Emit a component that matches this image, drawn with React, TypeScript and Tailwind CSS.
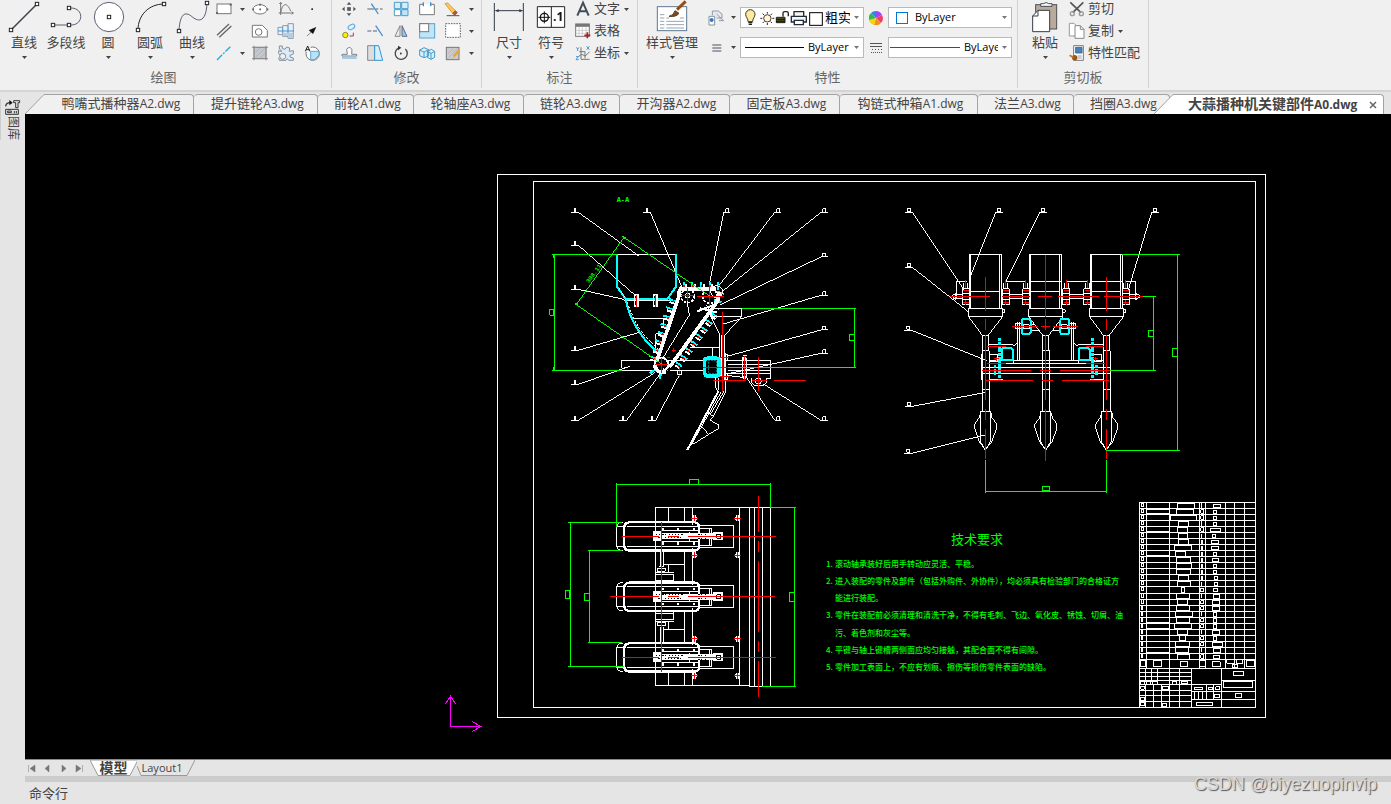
import React from "react";

type Kids = { children?: React.ReactNode };

const cjk = "font-['Open_Sans','Noto_Sans_CJK_SC',sans-serif]";

/* ---------- shared ribbon pieces ---------- */

function Ico({ vb, w = 22, h = 22, children }: Kids & { vb: string; w?: number; h?: number }) {
  return (
    <svg viewBox={vb} width={w} height={h} fill="none" stroke="#5b6170" strokeWidth="3" className="block shrink-0" aria-hidden="true">
      {children}
    </svg>
  );
}

function Caret() {
  return (
    <svg viewBox="0 0 5 3" width="5" height="3" className="block shrink-0" aria-hidden="true">
      <path d="M0 0H5L2.5 3Z" fill="#444" />
    </svg>
  );
}

function Big({ label, caret = true, wide = false, children }: Kids & { label: string; caret?: boolean; wide?: boolean }) {
  return (
    <button type="button" className={`flex shrink-0 flex-col items-center ${wide ? "w-[52px]" : "w-[42px]"}`}>
      {children}
      <span className="whitespace-nowrap leading-4">{label}</span>
      <span className="flex h-3.5 items-center">{caret && <Caret />}</span>
    </button>
  );
}

function Tool({ name, vb, children }: Kids & { name: string; vb: string }) {
  return (
    <button type="button" aria-label={name} className="flex h-[22px] w-[26px] shrink-0 items-center justify-center">
      <Ico vb={vb}>{children}</Ico>
    </button>
  );
}

function Drop({ name }: { name: string }) {
  return (
    <button type="button" aria-label={name} className="flex h-[22px] w-2.5 shrink-0 items-center justify-center">
      <Caret />
    </button>
  );
}

function Row({ children }: Kids) {
  return <div className="flex h-[22px] items-center">{children}</div>;
}

function Named({ label, vb, caret = false, children }: Kids & { label: string; vb: string; caret?: boolean }) {
  return (
    <button type="button" className="flex h-[22px] items-start whitespace-nowrap">
      <Ico vb={vb}>{children}</Ico>
      <span className="leading-5">{label}</span>
      {caret && <span className="flex h-[22px] items-center pl-1"><Caret /></span>}
    </button>
  );
}

function Group({ title, width, children }: Kids & { title: string; width: string }) {
  return (
    <section aria-label={title} className={`flex h-[88px] shrink-0 flex-col border-r border-[#d2d2d2] ${width}`}>
      <div className="flex h-[68px]">{children}</div>
      <div className="text-center leading-[18px] text-[#666]">{title}</div>
    </section>
  );
}

const sq = (x: number, y: number) => <rect key={`${x}-${y}`} x={x - 5} y={y - 5} width="10" height="10" fill="#fff" stroke="#222" />;

/* ---------- ribbon groups ---------- */

function DrawGroup() {
  return (
    <Group title="绘图" width="w-[332px] pr-1">
      <div className="flex pl-[3px]">
        <Big label="直线"><Ico vb="9 0 126 102" w={42} h={34}><path d="M33 90L111 12" strokeWidth="5" stroke="#444455" />{sq(33, 90)}{sq(111, 12)}</Ico></Big>
        <Big label="多段线" caret={false}><Ico vb="135 0 126 102" w={42} h={34}><path d="M159 75H213C252 75 252 24 213 24H207" />{sq(159, 75)}{sq(207, 75)}{sq(207, 24)}</Ico></Big>
        <Big label="圆"><Ico vb="261 0 126 102" w={42} h={34}><circle cx="327" cy="51" r="44" fill="#fff" />{sq(327, 51)}</Ico></Big>
        <Big label="圆弧"><Ico vb="387 0 126 102" w={42} h={34}><path d="M414 90C414 45 447 12 492 12" stroke="#222" />{sq(414, 90)}{sq(492, 12)}</Ico></Big>
        <Big label="曲线"><Ico vb="513 0 126 102" w={42} h={34}><path d="M537 93C540 30 562 38 576 50S618 75 621 9" />{sq(537, 93)}{sq(621, 9)}</Ico></Big>
      </div>
      <div className="-ml-0.5 -mt-0.5">
        <Row>
          <Tool name="矩形" vb="642 -6 66 66"><rect x="654" y="12" width="42" height="29" fill="#fff" stroke="#777" /><path d="M651 39h6M692 14h6" stroke="#555" strokeWidth="5" /></Tool>
          <Drop name="矩形选项" />
          <Tool name="椭圆" vb="747 -6 66 66"><ellipse cx="780" cy="28" rx="21" ry="14" fill="#fff" stroke="#777" /><path d="M778 28h5M757 28h5M800 28h5M778 14h5" strokeWidth="5" /></Tool>
          <Tool name="曲线图" vb="825 -6 66 66"><path d="M842 8V45M836 39H880M838 12l4-5 4 5M875 35l5 4-5 4M842 39C848 5 862 8 872 33" stroke="#777" /></Tool>
          <Tool name="点" vb="903 -6 66 66"><rect x="934" y="25" width="5" height="5" fill="#222" stroke="none" /></Tool>
        </Row>
        <Row>
          <Tool name="双线" vb="642 60 66 66"><path d="M654 106L690 72M661 112L697 78" strokeWidth="4" stroke="#666" /></Tool>
          <span className="w-2.5" />
          <Tool name="轮廓" vb="747 60 66 66"><path d="M757 76H787L802 91V111H757Z" fill="#fff" stroke="#777" /><circle cx="776" cy="96" r="10" stroke="#777" /></Tool>
          <Tool name="轴" vb="825 60 66 66"><path d="M834 82H848V104H834ZM848 77H864V109H848ZM864 71H880V115H864Z" fill="#e5f2fc" stroke="#8a9ab0" /><path d="M864 98H880V114H864ZM848 98H864V108H848Z" fill="#b9cde2" stroke="none" /><path d="M834 93H882" stroke="#3a9be0" /></Tool>
          <Tool name="箭头" vb="903 60 66 66"><path d="M921 108L936 94" stroke="#888" /><path d="M948 82L939 101L927 91Z" fill="#111" stroke="#111" strokeWidth="1" /></Tool>
        </Row>
        <Row>
          <Tool name="中心线" vb="642 126 66 66"><path d="M654 180L694 140" stroke="#27a8e0" strokeWidth="4" strokeDasharray="22 4 6 4" /></Tool>
          <Drop name="中心线选项" />
          <Tool name="剖面线" vb="747 126 66 66"><rect x="762" y="142" width="36" height="34" fill="#c5c8cc" stroke="#999" /><path d="M762 137V181M798 137V181M756 142H804M756 176H804" stroke="#8a8a8a" /><path d="M766 172L794 146M766 158L780 144M780 174L796 160" stroke="#a6a9ad" strokeWidth="2" /></Tool>
          <Tool name="齿轮" vb="825 126 66 66"><path d="M838 147V138H847V145L855 148L860 141L869 144L868 154L880 152V162L870 166V171L880 174V181H866L862 176L858 181H838L836 174L843 168L836 161V152L846 154Z" fill="#dcebf6" stroke="#85909c" /><circle cx="848" cy="169" r="9" fill="#f0f0f0" stroke="#85909c" /></Tool>
          <Tool name="局部视图" vb="903 126 66 66"><circle cx="938" cy="161" r="20" fill="#fff" stroke="#777" /><path d="M932 154H957V165L944 179H932Z" fill="#b9e1f8" stroke="#5aa9d6" /><path d="M914 156V136H932V156Z" fill="#f0f0f0" stroke="none" /><path d="M916 154L923 138L930 154M918 149H928" stroke="#222" /></Tool>
        </Row>
      </div>
    </Group>
  );
}

function EditGroup() {
  return (
    <Group title="修改" width="w-[150px]">
      <div className="-mt-0.5 pl-1">
        <Row>
          <Tool name="移动" vb="23 -6 66 66"><rect x="52" y="23" width="8" height="8" fill="#555" /><path d="M56 6l7 8H49zM56 48l7-8H49zM35 27l8-7v14zM77 27l-8-7v14z" fill="#555" stroke="none" /></Tool>
          <Tool name="修剪" vb="101 -6 66 66"><path d="M111 27H157" stroke="#5b6170" strokeDasharray="20 5 8 5" /><path d="M123 11L144 42" stroke="#3c8fd8" strokeWidth="4" /></Tool>
          <Tool name="阵列" vb="180 -6 66 66"><path d="M193 7H212V26H193ZM215 7H234V26H215Z" fill="#d3eefc" stroke="#4d9cc8" /><path d="M193 29H212V47H193Z" fill="#fff" stroke="#4d9cc8" /><path d="M215 29H234V47H215Z" fill="#bfe4f9" stroke="#4d9cc8" /></Tool>
          <Tool name="打断" vb="258 -6 66 66"><path d="M280 13H269V44H313V13H302" fill="#fff" stroke="#777" /><path d="M280 7V19M302 7V19" stroke="#3c8fd8" strokeWidth="4" /></Tool>
          <Tool name="删除" vb="336 -6 66 66"><path d="M345 11L353 9L376 32L368 40Z" fill="#ffc65b" stroke="#e39a31" /><path d="M368 40L376 32L382 38L374 46Z" fill="#a45a43" stroke="#a45a43" /><path d="M350 47H388" stroke="#555" /></Tool>
          <Drop name="删除选项" />
        </Row>
        <Row>
          <Tool name="复制对象" vb="23 60 66 66"><circle cx="45" cy="105" r="8" fill="#fff000" stroke="#8b8a38" /><rect x="53" y="74" width="21" height="13" rx="7" transform="rotate(-30 64 81)" fill="#dff2fd" stroke="#55a7d8" /><path d="M58 108H69V98" stroke="#a24343" /></Tool>
          <Tool name="延伸" vb="101 60 66 66"><path d="M111 93H144" strokeDasharray="12 5" /><path d="M136 77L157 108" stroke="#3c8fd8" strokeWidth="4" /></Tool>
          <Tool name="镜像" vb="180 60 66 66"><path d="M210 77V109H195Z" fill="#eee" stroke="#888" /><path d="M216 77V109H231Z" fill="#8ecaed" stroke="#668" /></Tool>
          <Tool name="缩放" vb="258 60 66 66"><rect x="269" y="71" width="45" height="43" fill="#bfe5fa" stroke="#59a4cc" /><rect x="269" y="71" width="27" height="24" fill="#fff" stroke="#777" /></Tool>
          <Tool name="边界" vb="336 60 66 66"><rect x="347" y="71" width="44" height="41" fill="#fff" stroke="#666" strokeDasharray="5 3" /></Tool>
          <Drop name="边界选项" />
        </Row>
        <Row>
          <Tool name="偏移" vb="23 126 66 66"><path d="M35 163H51L49 148Q56 137 65 148L64 163H79V168H35Z" fill="#fff" stroke="#718292" /><path d="M35 174H79" stroke="#7abce0" strokeWidth="4" /></Tool>
          <Tool name="拉伸" vb="101 126 66 66"><path d="M112 137H133V181H112Z" fill="#ddd" stroke="#888" /><path d="M133 137H145L157 181H133Z" fill="#d4f0fd" stroke="#3695d3" /></Tool>
          <Tool name="旋转" vb="180 126 66 66"><path d="M226 147A18 18 0 1 1 204 145" stroke="#444" strokeWidth="4" /><path d="M204 137L214 143L204 151Z" fill="#333" stroke="none" /><rect x="210" y="158" width="5" height="5" fill="#333" stroke="none" /></Tool>
          <Tool name="三维阵列" vb="258 126 66 66"><path d="M269 150L282 143L296 149V168L282 173L269 167ZM269 150L282 156L296 149M282 156V173M292 154L304 148L314 154V172L303 178L292 172ZM292 154L303 160L314 154M303 160V178" fill="#d5effc" stroke="#489bc8" /></Tool>
          <Tool name="编辑剖面线" vb="336 126 66 66"><rect x="349" y="142" width="38" height="37" fill="#ccc" stroke="#777" /><path d="M353 175L383 145M353 162L370 145M367 176L384 160" stroke="#aaa" strokeWidth="2" /><path d="M371 169L388 150" stroke="#e8a33a" strokeWidth="7" /></Tool>
          <Drop name="编辑剖面线选项" />
        </Row>
      </div>
    </Group>
  );
}

function NoteGroup() {
  return (
    <Group title="标注" width="w-[156px]">
      <div className="flex pl-1.5">
        <Big label="尺寸"><Ico vb="474 0 126 102" w={42} h={34}><path d="M493 9V93M580 9V93M496 32H578" stroke="#333a48" /><path d="M496 32l10-5v10zM578 32l-10-5v10z" fill="#333a48" stroke="none" /></Ico></Big>
        <Big label="符号"><Ico vb="600 0 126 102" w={42} h={34}><path d="M622 20H704V82H622ZM664 20V82" fill="#fff" stroke="#222" /><circle cx="643" cy="52" r="12" stroke="#111" strokeWidth="4" /><path d="M625 52H661M643 34V70" stroke="#111" /><text x="669" y="64" fontSize="36" fontWeight="700" fill="#111" stroke="none">.1</text></Ico></Big>
      </div>
      <div className="-mt-0.5">
        <Named label="文字" caret vb="726 -6 66 66"><path d="M742 47L759 8L776 47M748 34H770" stroke="#444b59" strokeWidth="6" /></Named>
        <Named label="表格" vb="726 60 66 66"><rect x="737" y="72" width="41" height="37" fill="#fff" stroke="#777" /><path d="M737 76H778" stroke="#777" strokeWidth="9" /><path d="M737 91H778M737 100H778M747 80V109M757 80V109M768 80V109" stroke="#bbb" strokeWidth="2" /><path d="M763 106H781M772 97V115" stroke="#b71922" strokeWidth="5" /></Named>
        <Named label="坐标" caret vb="726 126 66 66"><path d="M753 142V178H779M748 155H765V175M745 170L755 163L766 168L779 155" stroke="#777" /><path d="M739 142l4 5v6M747 142l-4 5M770 139l8 10M778 139l-8 10M738 170h7l-7 9h8" stroke="#4196dc" /></Named>
      </div>
    </Group>
  );
}

function Combo({ name, value, align = "", lead }: { name: string; value: string; align?: string; lead: React.ReactNode }) {
  return (
    <div className="flex h-[21px] w-[124px] items-center border border-[#bababa] bg-white pr-1 text-black">
      {lead}
      <select aria-label={name} className={`h-full min-w-0 flex-1 appearance-none overflow-hidden bg-transparent ${align}`}>
        <option>{value}</option>
      </select>
      <svg viewBox="0 0 5 3" width="5" height="3" className="ml-1 shrink-0" aria-hidden="true"><path d="M0 0H5L2.5 3Z" fill="#777" /></svg>
    </div>
  );
}

function PropGroup() {
  return (
    <Group title="特性" width="w-[380px]">
      <div className="flex pl-2">
        <Big label="样式管理" wide>
          <Ico vb="48 0 156 102" w={52} h={34}>
            <rect x="82" y="20" width="88" height="72" fill="#fff" stroke="#5d7893" />
            <path d="M90 44H103M90 54H103M90 64H103M90 74H103M90 84H103M109 64H162M109 74H162M109 84H162M109 54H118M150 54H162" stroke="#98a3b3" />
            <path d="M141 29L167 4" stroke="#964e18" strokeWidth="9" /><path d="M117 49Q132 46 135 32L147 40Q138 52 117 49Z" fill="#7a4a1c" stroke="#55402c" />
          </Ico>
        </Big>
      </div>
      <div className="flex flex-col gap-[9px] pl-2 pt-[7px]">
        <div className="flex h-[21px] items-center">
          <Ico vb="229 19 66 66"><path d="M248 44V31H266L277 40V52H261M261 40L272 51L282 60H268" fill="#e5e9ed" stroke="#919aa4" /><path d="M238 47H255V73H238Z" fill="#fff" stroke="#8391a0" /><circle cx="246" cy="58" r="6" fill="#327abb" stroke="none" /></Ico>
          <Drop name="图层选项" />
          <span className="w-0.5" />
          <Combo name="图层" value="粗实线层" align="text-[13px]" lead={
            <Ico vb="333 24 252 57" w={84} h={19}>
              <path d="M354 65C354 54 347 52 347 43A14 14 0 0 1 375 43C375 52 368 54 368 65Z" fill="#ffe9a1" stroke="#3a3522" /><path d="M355 68H367M356 73H366" stroke="#222" strokeWidth="4" />
              <circle cx="412" cy="55" r="11" fill="#fff6db" stroke="#4b3b2a" /><path d="M412 36V41M412 69V75M391 55H397M427 55H433M398 41l4 4M422 65l4 4M426 41l-4 4M402 65l-4 4" stroke="#222" />
              <path d="M439 52H465V68H439Z" fill="#5a5820" stroke="#222" /><path d="M439 58H465M439 64H465" stroke="#111" /><path d="M459 50V39Q459 35 464 35H470Q475 35 475 40V49" stroke="#222" strokeWidth="4" />
              <path d="M492 47V35H521V47M484 49H529V66H484Z" fill="#f5f5f5" stroke="#222b38" strokeWidth="4" /><path d="M493 61H520V74H493Z" fill="#fff" stroke="#222b38" strokeWidth="4" />
              <rect x="539" y="38" width="38" height="38" fill="#fff" stroke="#000" />
            </Ico>} />
          <span className="flex w-6 justify-center"><svg viewBox="0 0 14 14" width="14" height="14" aria-hidden="true"><path d="M7 7V0A7 7 0 0 1 13 4Z" fill="#a544f4" /><path d="M7 7L13 4A7 7 0 0 1 12 12Z" fill="#f03d70" /><path d="M7 7L12 12A7 7 0 0 1 5 14Z" fill="#fb8c1c" /><path d="M7 7L5 14A7 7 0 0 1 0 9Z" fill="#f5d30d" /><path d="M7 7L0 9A7 7 0 0 1 2 2Z" fill="#35ba42" /><path d="M7 7L2 2A7 7 0 0 1 7 0Z" fill="#258be9" /></svg></span>
          <Combo name="颜色" value="ByLayer" align="ml-[7px] text-[11px]" lead={<span className="ml-[7px] block h-3 w-3 shrink-0 border border-[#0078d7] bg-white" />} />
        </div>
        <div className="flex h-[21px] items-center">
          <Ico vb="229 111 66 66"><path d="M248 135H275M248 144H275M248 153H275" stroke="#4d5160" /></Ico>
          <Drop name="线宽选项" />
          <span className="w-0.5" />
          <Combo name="线宽" value="ByLayer" align="ml-1 text-[11px]" lead={<span className="ml-1 block w-[59px] shrink-0 border-t border-black" />} />
          <span className="flex w-6 justify-center"><svg viewBox="0 0 12 12" width="12" height="12" stroke="#555" aria-hidden="true"><path d="M0 1.5H12M0 4.5H12M0 7.5H12M0 10.5H12" /><path d="M0 7.5H12" strokeDasharray="2 1" stroke="#eee" /><path d="M0 10.5H12" strokeDasharray="1 1" stroke="#eee" /></svg></span>
          <Combo name="线型" value="ByLayer" align="ml-1 text-[11px]" lead={<span className="ml-px block w-[70px] shrink-0 border-t border-[#f00]" />} />
        </div>
      </div>
    </Group>
  );
}

function ClipGroup() {
  return (
    <Group title="剪切板" width="w-[131px]">
      <div className="flex pl-1.5">
        <Big label="粘贴"><Ico vb="42 0 126 102" w={42} h={34}><rect x="77" y="14" width="63" height="73" fill="#b8ab9c" stroke="#4b4f55" /><path d="M92 19V11H101Q108 4 116 11H126V19Z" fill="#fff" stroke="#444a53" /><path d="M68 48L84 31H119V95H68Z" fill="#fff" stroke="#363c45" /><path d="M68 48H84V31" stroke="#363c45" /></Ico></Big>
      </div>
      <div className="-mt-0.5">
        <Named label="剪切" vb="168 -6 66 66"><path d="M181 7L213 38M220 7L188 38" stroke="#555" strokeWidth="5" /><circle cx="187" cy="41" r="6" strokeWidth="4" stroke="#999" /><circle cx="214" cy="41" r="6" strokeWidth="4" stroke="#999" /></Named>
        <Named label="复制" caret vb="168 60 66 66"><path d="M178 70H192L201 79V108H178Z" fill="#fff" stroke="#999" /><path d="M195 77H211L222 88V115H195Z" fill="#fff" stroke="#888" /><path d="M211 77V88H222" stroke="#888" /></Named>
        <Named label="特性匹配" vb="168 126 66 66"><path d="M191 137H220V181H191Z" fill="#fff" stroke="#777" /><path d="M197 142H216V159H197Z" fill="#4a82b8" stroke="#3d6c9b" /><path d="M203 168H215M203 174H215" stroke="#999" /><circle cx="194" cy="173" r="8" fill="#9d5513" stroke="none" /><path d="M179 166L191 173" stroke="#bc762f" strokeWidth="5" /></Named>
      </div>
    </Group>
  );
}

/* ---------- document tabs ---------- */

const docs: [string, string, string][] = [
  ["提升链轮", "A3.dwg", "w-[124px]"],
  ["前轮", "A1.dwg", "w-24"],
  ["轮轴座", "A3.dwg", "w-[110px]"],
  ["链轮", "A3.dwg", "w-24"],
  ["开沟器", "A2.dwg", "w-[110px]"],
  ["固定板", "A3.dwg", "w-[110px]"],
  ["钩链式种箱", "A1.dwg", "w-[138px]"],
  ["法兰", "A3.dwg", "w-24"],
  ["挡圈", "A3.dwg", "w-24"],
];

function DocTabs() {
  const tab = "flex h-5 shrink-0 items-start justify-center whitespace-nowrap rounded-t border-t border-r border-[#a3a3a3] bg-[#f0f0f0] pl-1 leading-[17px]";
  return (
    <nav aria-label="图纸" className="flex h-[22px] shrink-0 items-end">
      <svg width="20" height="20" viewBox="0 0 20 20" className="shrink-0" aria-hidden="true"><path d="M0 20L18 1.5Q19 .5 20 .5V20Z" fill="#f0f0f0" /><path d="M0 20L18 1.5Q19 .5 20 .5" fill="none" stroke="#a3a3a3" /></svg>
      <button type="button" className={`${tab} w-[149px] rounded-l-none`}>鸭嘴式播种器<span className="text-[12px]">A2.dwg</span></button>
      {docs.map(([a, b, w]) => (
        <button type="button" key={a} className={`${tab} ${w}`}>{a}<span className="text-[12px]">{b}</span></button>
      ))}
      <svg width="20" height="20" viewBox="0 0 20 20" className="-ml-4 shrink-0" aria-hidden="true"><path d="M0 20L18 1.5Q19 .5 20 .5V20Z" fill="#fff" /><path d="M0 20L18 1.5Q19 .5 20 .5" fill="none" stroke="#a3a3a3" /></svg>
      <div className="flex h-5 w-[210px] shrink-0 items-center justify-between rounded-tr border-t border-r border-[#a3a3a3] bg-white pl-3.5 pr-1.5 font-bold">
        <button type="button" className="h-5 whitespace-nowrap text-[14px] leading-[18px]">大蒜播种机关键部件<span className="text-[12px]">A0.dwg</span></button>
        <button type="button" aria-label="关闭"><svg width="8" height="8" viewBox="0 0 8 8" stroke="#666" strokeWidth="1.5" aria-hidden="true"><path d="M1 1L7 7M7 1L1 7" /></svg></button>
      </div>
    </nav>
  );
}

/* ---------- drawing ---------- */

function SideView() {
  const left: number[][] = [
    [105, 97, 298, 229], [105, 196, 290, 350], [105, 328, 252, 358], [105, 511, 298, 457], [105, 613, 270, 559],
    [105, 721, 345, 578], [250, 721, 372, 565], [337, 721, 418, 585], [321, 97, 425, 320],
  ];
  const right: number[][] = [
    [561, 97, 508, 312], [714, 97, 535, 320], [853, 97, 540, 340], [853, 231, 540, 375], [853, 346, 550, 432],
    [853, 450, 565, 528], [853, 520, 570, 580], [714, 721, 618, 590], [853, 721, 670, 612],
  ];
  return (
    <g transform="translate(540 180) scale(0.33333)" stroke="#fff" strokeWidth="3">
      {left.map(([x, y, a, b]) => <path key={`${x}.${y}`} d={`M${x - 12} ${y}h24M${x} ${y}v-12M${x + 10} ${y}L${a} ${b}`} />)}
      {left.map(([x, y]) => <path key={`${x}/${y}`} d={`M${x} ${y}v-12`} strokeWidth="6" />)}
      {right.map(([x, y, a, b]) => <path key={`${x}.${y}`} d={`M${x - 10} ${y}h20M${x - 4} ${y}v-11h9v11M${x - 10} ${y}L${a} ${b}`} />)}

      <path d="M231 223H408M252 363H345L352 363H410M283 415H372V440M347 510V462H368V480M450 502H538M518 502V535" />
      <path d="M245 541H345M245 571H342M245 541V565L258 563M385 541H490M390 571H490" />
      <g stroke="#0ff" strokeWidth="6">
        <path d="M231 223V320L257 357H382L408 320V223M257 360C273 430 310 480 350 515" />
      </g>
      <path d="M237 325L262 365C285 440 318 475 355 508" strokeDasharray="7 5" />
      <path d="M284 345h10v33h-10zM341 345h10v33h-10z" strokeWidth="5" />
      <path d="M289 345V380M346 345V380" stroke="red" />

      <g stroke="#0ff" strokeWidth="24" strokeDasharray="6 20">
        <path d="M399 358L339 535M524 402L404 572" />
        <path d="M428 318H540M542 335L525 385" />
        <path d="M338 570Q348 590 385 582" />
      </g>
      <g strokeWidth="18" strokeDasharray="6 20">
        <path d="M398 366L338 543M520 410L400 580" /><path d="M436 320H540" />
      </g>
      <g strokeWidth="11" strokeLinejoin="round">
        <path d="M418 345L350 545M515 388L388 562M424 328H528M425 322Q414 335 418 350M538 335Q540 360 515 388" />
        <path d="M344 555Q350 582 378 575" />
      </g>
      <g stroke="red" strokeWidth="6" strokeDasharray="5 21">
        <path d="M402 362L342 538M522 406L403 575M430 319H540" />
      </g>
      <g strokeDasharray="8 4" strokeWidth="5"><circle cx="443" cy="348" r="20" /><circle cx="510" cy="348" r="22" /></g>
      <circle cx="365" cy="553" r="20" strokeWidth="6" /><circle cx="530" cy="335" r="18" />
      <path d="M437 342h12v12h-12zM441 362L448 405L365 540M500 375L518 408" />
      <path d="M470 395L520 375M480 385L530 397" strokeWidth="6" />
      <path d="M423 348H463M443 325V362M472 349H551M510 322V378M345 553H385M365 533V578M396 511H408M402 505V517M380 532H390M418 560V590" stroke="red" />
      <path d="M412 572h14v12h-14z" />

      <path d="M512 385H606V409L555 465V590M512 385V409L540 465V532M518 409H606M544 465V590" />
      <path d="M542 530V590M555 520V595" strokeWidth="6" />
      <path d="M500 535H530Q538 535 538 545V578Q538 588 528 588H505Q494 588 494 578V543Q494 535 502 535Z" stroke="#0ff" strokeWidth="11" />
      <path d="M505 542H530V580H505Z" stroke="#077" strokeDasharray="5 4" />
      <path d="M553 541H692V595H680V608L672 616H642L635 608V595M563 553H692M563 571H692M563 580H692M607 533h12v60h-12zM610 528h10M553 523h10v18h-10zM553 580h10v18h-10zM560 586L608 592" />
      <path d="M608 535h10M608 592h10" strokeWidth="10" />
      <circle cx="655" cy="603" r="9" />
      <path d="M528 590V625L535 634M537 595V630M558 590V634L520 710M552 634L510 705" />
      <path d="M535 634L442 810" strokeWidth="6" />
      <path d="M543 636L452 798M505 698L520 710L510 720L536 735V745L460 792M485 740L505 762" />
      <path d="M547 395V635M490 562H620M613 528V600M520 601H618M655 531V633M635 601H680M702 601H798M540 532H568M540 589H568" stroke="red" />

      <g stroke="#0f0">
        <path d="M232 223H36M43 223V571M36 571H245M29 388h12v18h-12zM252 172L108 375M252 172L510 349M108 373L365 552M606 385H948M943 385V562M563 562H948M928 463h15v18h-15z" />
        <path d="M247 169l9 6M106 371l8 5M43 223v10M43 561v10" strokeWidth="5" />
      </g>
      <g fill="#0f0" stroke="none" fontFamily="Liberation Mono, monospace" fontWeight="700">
        <text x="230" y="66" fontSize="21">A-A</text>
        <text x="147" y="310" fontSize="18" transform="rotate(-54 147 310)">308.11</text>
      </g>
    </g>
  );
}

function Opener({ dx }: { dx: number }) {
  return (
    <g transform={`translate(${dx} 0)`}>
      <path d="M238 193H335V355M239 193V355M242 193V355M328 193V355M242 304H328M235 356H338V379H235ZM338 360H345V367H338M235 379L277 436V482M338 379L295 436V482M277 436H295" />
      <path d="M277 482H298V664H277ZM277 598H298M271 664H301V755L286 780L271 755ZM271 670L268 683L254 702V715L268 755L286 780L305 755L320 715V702L306 683L304 670" />
    </g>
  );
}

function FrontView() {
  const marks: number[][] = [
    [57, 67, 222, 300, 1], [327, 67, 240, 262, -1], [459, 67, 346, 278, -1], [795, 67, 715, 300, -1],
    [57, 232, 235, 365, 1], [55, 421, 290, 512, 1], [57, 649, 288, 607, 1], [55, 790, 288, 734, 1],
  ];
  const bearings = [228, 348, 408, 529, 592, 708];
  return (
    <g transform="translate(890 190) scale(0.33333)" stroke="#fff" strokeWidth="3">
      {marks.map(([x, y, a, b, s]) => <path key={`${x}.${y}`} d={`M${x - 12} ${y}h24M${x - 5} ${y - 3}v-9h10v9zM${x + 10 * s} ${y}L${a} ${b}`} />)}
      <Opener dx={0} /><Opener dx={181} /><Opener dx={363} />
      <path d="M422 275H515M605 275H697M199 275H232M199 275V325M737 275V325M705 275H737M347 275H408M530 275H592M358 313H398M358 325H398M540 313H580M540 325H580M190 313H218M190 325H218M718 313H745M718 325H745M185 319L198 309V329ZM752 319L738 309V329Z" />
      {bearings.map((x) => (
        <g key={x}>
          <path d={`M${x - 10} 296h20v48h-20zM${x - 10} 310h20M${x - 10} 330h20M${x - 6} 280v14M${x + 6} 280v14`} />
          <path d={`M${x - 8} 303h16M${x - 8} 337h16M${x} 270v24M${x} 330v14`} stroke="red" />
        </g>
      ))}
      <path d="M275 532H661V550H275ZM298 520H640M298 511H640M382 395V511M388 395V511M544 395V511M550 395V511M376 402h18v15h-18zM540 402h18v15h-18zM422 404H432M422 421H450M485 421H509M295 463H368M565 463H640M368 470L382 458M565 470L550 458M275 493V570M661 493V570M298 493H322V516H298M610 493H636V516H610M298 568H338M600 568H640M370 511V520M565 511V520" />
      <g stroke="#0ff" strokeWidth="6">
        <path d="M399 387h19l4 5v35l-4 5h-19l-4-5v-35zM514 387h20l4 5v35l-4 5h-20l-4-5v-35zM339 475h26l3 3v30l-3 3h-26l-3-3v-30zM570 475h26l3 3v30l-3 3h-26l-3-3v-30z" />
        <path d="M328 445V571M607 445V571M315 525V558M619 525V558" strokeWidth="8" strokeDasharray="9 2" />
      </g>
      <path d="M400 404h18v12h-18zM514 404h18v12h-18z" />
      <path d="M180 319H300M335 319H420M445 319H485M505 319H628M642 319H760M286 261V362M286 387V420M286 436V630M286 657V690M286 716V808M649 261V362M649 387V420M649 436V630M649 657V690M649 716V808M466 195V380M466 387V420M466 436V630M466 657V812M367 409H443M453 409H480M490 409H563M292 469H347M588 469H642M292 520H347M588 520H645M276 541H423M450 541H483M510 541H660M286 571H428M455 571H488M516 571H658M312 506H326M319 500V513M610 506H624M617 500V513" stroke="red" />
      <path d="M695 193H870M862 193V781M649 781H870M847 475h15v24h-15zM758 319H798M790 319V541M661 541H798M775 421h15v18h-15zM286 810V908M649 810V908M286 904H649M457 889h21v14h-21z" stroke="#0f0" />
    </g>
  );
}

function RowUnit({ y }: { y: number }) {
  return (
    <g transform={`translate(0 ${y})`}>
      <path d="M425 -33H536V33H433M433 -24H470V27H433M463 -24V27M470 0H536" />
      <path d="M205 -42H197Q185 -40 185 -27V28Q185 40 197 43H205M187 -30H208M187 31H208M215 -30H430M215 31H430" />
      <path d="M420 -42H222Q208 -40 208 -27V28Q208 41 222 43H420Q433 40 433 28V-27Q433 -40 420 -42Z" strokeWidth="7" />
      <path d="M320 -16H433M320 15H433M403 -14V15" />
      <path d="M294 -16H320V15H294ZM320 -9H400V9H320ZM400 -9H473V9H400ZM473 -13H504V12H473Z" fill="#fff" stroke="none" />
      <path d="M303 -5H388M310 5H388M430 -6H460M430 6H460" stroke="#000" strokeDasharray="4 5 3 7" />
      <path d="M486 -6h12v12h-12z" stroke="#000" />
      <path d="M321 -22h6M366 -22h6M414 -22h6M321 22h6M366 22h6M414 22h6" strokeWidth="7" />
    </g>
  );
}

function TopView() {
  const bolts: number[][] = [[419, 145], [547, 145], [419, 256], [547, 256], [419, 506], [547, 506], [419, 617], [547, 617]];
  return (
    <g transform="translate(555 470) scale(0.33333)" stroke="#fff" strokeWidth="3">
      <path d="M301 112H646V649H583V646H301ZM553 112V646M583 112V646M598 112V649M622 112V649M412 112V166M412 233V346M412 415V526M412 596V646M388 112V157M388 242V337M388 424V517M388 605V646M340 112V157M340 283V307M340 454V478M340 605V646M301 242V337M301 424V517" />
      <path d="M325 283H388M325 478H388M316 242V290M325 242V290M316 470V517M325 470V517M307 295H331V304H307ZM312 289H328M301 307H356M301 313H356V337M301 331H356M301 430H356M301 448H356V424M301 454H356M307 457H331V467H307Z" />
      <RowUnit y={199} /><RowUnit y={380} /><RowUnit y={562} />
      {bolts.map(([x, y]) => <g key={`${x}.${y}`}><path d={`M${x} ${y - 9}v18M${x - 6} ${y}h13`} strokeWidth="8" /><path d={`M${x - 10} ${y}h20M${x} ${y - 9}v18`} stroke="red" /></g>)}
      <path d="M319 156V607M610 78V186M610 213V246M610 273V486M610 513V546M610 573V681M201 199H313M340 199H372M400 199H663M165 379H313M340 379H372M400 379H660M201 562H313M340 562H372M400 562H663" stroke="red" />
      <path d="M184 38V170M184 43H646M646 38V112M403 28h28v15h-28zM646 112H723M718 112V649M622 649H723M703 367h15v27h-15zM40 157H201M46 157V589M40 589H208M31 361h13v24h-13zM98 241H201M103 241V517M98 517H201M88 370h15v21h-15z" stroke="#0f0" />
    </g>
  );
}

const itemNames: number[][] = [
  [142, 52], [139, 52], [121, 79], [145, 31], [142, 31], [145, 28], [145, 31], [133, 52], [136, 31], [139, 43], [139, 46], [139, 43], [145, 31],
  [142, 40], [154, 10], [139, 40], [142, 31], [139, 40], [136, 52], [139, 40], [133, 52], [142, 31], [148, 19], [136, 43], [136, 40], [142, 37],
];
const itemNotes: number[][] = [
  [250, 22], [250, 10], [250, 10], [250, 10], [241, 31], [247, 10], [244, 22], [244, 22], [250, 10], [247, 19], [250, 10], [250, 10], [253, 10],
  [253, 10], [250, 13], [250, 19], [247, 22], [247, 22], [250, 10], [250, 10], [250, 10], [247, 22], [250, 10], [247, 31], [250, 22], [250, 19],
];

function PartsTable() {
  const cols = [28, 49, 118, 208, 226, 286, 313, 343];
  const y = (i: number) => Math.round(38 + i * 18.1);
  return (
    <g transform="translate(1130 490) scale(0.33333)" stroke="#fff" strokeWidth="3">
      {cols.map((x) => <path key={x} d={`M${x} 38V535`} />)}
      <path d="M118 38V652M28 38V652M376 38V652" />
      {itemNames.map(([x, w], i) => (
        <g key={i}>
          <path d={`M28 ${y(i)}H376`} />
          <path d={`M${x} ${y(i) + 2}h${w}v15h${-w}z`} />
          <path d={`M${itemNotes[i][0]} ${y(i) + 5}h${itemNotes[i][1]}v10h${-itemNotes[i][1]}z`} />
          <path d={i < 17 ? `M34 ${y(i) + 2}h7v10h-7z` : `M36 ${y(i) + 2}v11`} strokeWidth={i < 17 ? 3 : 5} />
          <path d={i % 3 === 0 || (i > 4 && i < 14) ? `M216 ${y(i) + 2}v13` : `M212 ${y(i) + 4}h9v10h-9z`} strokeWidth={i > 5 && i < 13 ? 5 : 3} />
        </g>
      ))}
      <path d="M52 57H116M52 72H116M50 92H118M50 127H118M50 199H118M50 383H118M50 400H118M50 417H118M50 455H118M50 490H118" strokeWidth="5" />
      <path d="M28 509H376M28 535H376M31 512h16v18h-16zM70 512h25v18h-25zM151 515h22v15h-22zM209 512h17v18h-17zM247 515h24v15h-24zM291 510h22v10h-22zM319 510h20v10h-20zM308 523h14v11h-14zM349 511h24v19h-24z" />
      <path d="M28 547H185M28 559H185M28 571H185M28 584H185M28 601H185M28 618H185M28 634H185M28 652H376M185 535V652M149 535V652M274 535V652M46 535V575M64 535V575M82 535V575M46 585V652M70 585V652M94 585V652" />
      <path d="M185 583H274M185 604H376M185 628H376M230 583V628M252 583V628M193 604V628M205 604V628M218 604V628M274 571H376M280 576H368V594H280ZM310 544h31v13h-31zM317 610h18v13h-18zM199 637h49v10h-49zM193 592h25v7h-25zM235 592h14v7h-14zM257 590h12v9h-12zM255 613h14v10h-14z" />
      <path d="M31 574h12v9h-12zM49 574h13v9h-13zM67 574h16v9h-16zM127 574h13v9h-13zM154 574h19v7h-19zM33 589h10v9h-10zM97 589h19v9h-19zM31 622h13v10h-13zM31 639h13v8h-13zM97 640h13v9h-13z" />
    </g>
  );
}

const notes: [number, string, string][] = [
  [567, "1.", "滚动轴承装好后用手转动应灵活、平稳。"],
  [584, "2.", "进入装配的零件及部件（包括外购件、外协件），均必须具有检验部门的合格证方"],
  [601, "", "能进行装配。"],
  [618, "3.", "零件在装配前必须清理和清洗干净，不得有毛刺、飞边、氧化皮、锈蚀、切屑、油"],
  [636, "", "污、着色剂和灰尘等。"],
  [653, "4.", "平键与轴上键槽两侧面应均匀接触，其配合面不得有间隙。"],
  [670, "5.", "零件加工表面上，不应有划痕、擦伤等损伤零件表面的缺陷。"],
];

function Drawing() {
  return (
    <svg viewBox="25 114 1366 645" preserveAspectRatio="xMinYMin meet" className="block h-full w-full" fill="none" shapeRendering="crispEdges" role="img" aria-label="大蒜播种机关键部件A0">
      <path d="M497.500 174.500H1265.500V717.500H497.500ZM533.500 181.500H1255.500V707.500H533.500Z" stroke="#fff" />
      <SideView />
      <FrontView />
      <TopView />
      <PartsTable />
      <g fill="#0f0" fontFamily="'Noto Sans CJK SC', sans-serif">
        <text x="951" y="544" fontSize="13">技术要求</text>
        {notes.map(([y, n, t]) => (
          <g key={y} fontSize="8" fontWeight="500">
            {n && <text x="826" y={y}>{n}</text>}
            <text x="835" y={y}>{t}</text>
          </g>
        ))}
      </g>
      <path d="M450.500 697V726.500H480M445.500 704L450.500 696L455.500 704M472 721.500L481 726.500L472 731.500" stroke="#f0f" />
    </svg>
  );
}

/* ---------- page ---------- */

function SheetTabs() {
  return (
    <div className="flex h-[17px] shrink-0 items-start border-t border-[#8a8a8a] bg-[#e5e5e5]">
      <div className="flex h-4 w-[65px] shrink-0 items-center justify-between pl-0.5 pr-1.5">
        {[["首页", "M1.5 1V8M8 1L3 4.500L8 8Z"], ["上一页", "M6 1L2 4.500L6 8Z"], ["下一页", "M3 1L7 4.500L3 8Z"], ["末页", "M7.500 1V8M1 1L6 4.500L1 8Z"]].map(([n, d]) => (
          <button type="button" key={n} aria-label={n}><svg width="9" height="9" viewBox="0 0 9 9" fill="#777" stroke="#777" strokeWidth=".5" aria-hidden="true"><path d={d} /></svg></button>
        ))}
      </div>
      <button type="button" className="relative h-4 w-[47px] shrink-0 text-[14px] font-bold leading-3">
        <svg viewBox="0 0 47 16" className="absolute inset-0" aria-hidden="true"><path d="M0 0L8 15.500H40L48 0Z" fill="#fff" stroke="#999" /></svg>
        <span className="relative">模型</span>
      </button>
      <button type="button" className="relative h-4 w-[58px] shrink-0 pr-2 text-[11px] leading-3">
        <svg viewBox="0 0 58 16" className="absolute inset-0" aria-hidden="true"><path d="M0 6L4 15.500H50L58 0" fill="none" stroke="#999" /></svg>
        <span className="relative">Layout1</span>
      </button>
    </div>
  );
}

export default function App() {
  return (
    <div lang="zh-CN" className={`relative flex h-screen flex-col overflow-hidden bg-[#e5e5e5] text-[13px] text-[#444] ${cjk}`}>
      <header className="flex h-[92px] shrink-0 border-b-2 border-[#d4d4d4] bg-[#f0f0f0]">
        <DrawGroup />
        <EditGroup />
        <NoteGroup />
        <PropGroup />
        <ClipGroup />
      </header>
      <div className="flex min-h-0 flex-1">
        <aside className="w-[25px] shrink-0 pt-[7px]">
          <button type="button" className="flex flex-col items-center border-l border-[#ccc] pl-[3px]">
            <svg viewBox="12 297 51 51" width="17" height="17" fill="none" stroke="#333" strokeWidth="3" aria-hidden="true">
              <path d="M17 319Q18 308 31 308" strokeWidth="4" /><path d="M28 300L38 308L28 316Z" fill="#111" stroke="none" /><path d="M41 302H59V308H54V323H47V308H41ZM17 328H55V343H17ZM23 333H34V338H23ZM43 333V340M49 333V340" />
            </svg>
            <span className="text-[12px] leading-4 [text-orientation:sideways] [writing-mode:vertical-rl]">图库</span>
          </button>
        </aside>
        <div className="flex min-w-0 flex-1 flex-col">
          <DocTabs />
          <main className="min-h-0 flex-1 bg-black"><Drawing /></main>
          <SheetTabs />
          <div className="h-1.5 shrink-0 bg-[#ccc]" />
          <footer className="h-[22px] shrink-0 pl-1 leading-[22px]">命令行</footer>
        </div>
      </div>
      <div className="pointer-events-none absolute bottom-2 right-3.5 font-['Liberation_Sans',sans-serif] text-[18px] leading-6 text-[#d8d8d8] [text-shadow:1px_1px_1px_#555]">CSDN @biyezuopinvip</div>
    </div>
  );
}
